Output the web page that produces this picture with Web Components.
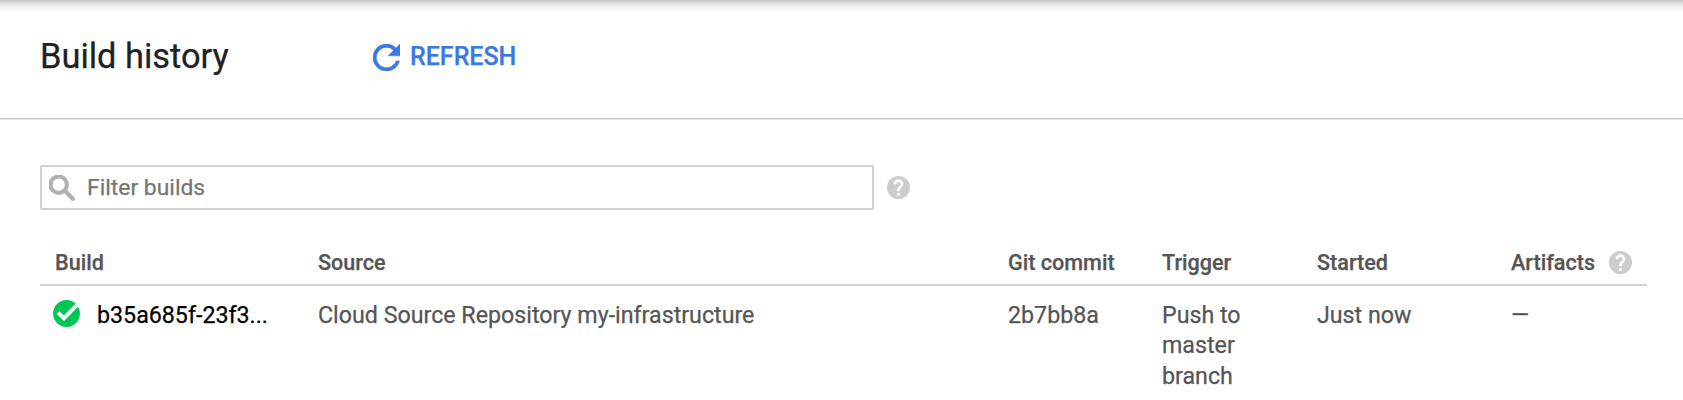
<!DOCTYPE html>
<html lang="en">
<head>
<meta charset="utf-8">
<title>Build history</title>
<style>
html,body{margin:0;background:#fff}
body{font-family:Roboto,"Liberation Sans",sans-serif;height:400px;overflow:hidden;-webkit-text-stroke:.25px}
</style>
</head>
<body>
<build-page></build-page>
<script>
const define = (name, html) => customElements.define(name, class extends HTMLElement {
  constructor() {
    super();
    const t = document.createElement('template');
    t.innerHTML = html;
    this.attachShadow({mode: 'open'}).append(t.content.cloneNode(true));
  }
});

define('help-icon', `<style>:host{display:block;width:23px;height:23px;flex:none}svg{display:block;width:100%;height:100%}</style>
<svg viewBox="2 2 20 20"><circle cx="12" cy="12" r="10" fill="#ccc"/><path fill="#fff" stroke="#fff" stroke-width=".4" d="M13 19h-2v-2h2v2zm2.07-7.75l-.9.92C13.45 12.9 13 13.5 13 15h-2v-.5c0-1.1.45-2.1 1.17-2.83l1.24-1.26c.37-.36.59-.86.59-1.41 0-1.1-.9-2-2-2s-2 .9-2 2H8c0-2.21 1.79-4 4-4s4 1.79 4 4c0 .88-.36 1.68-.93 2.25z"/></svg>`);

define('status-success', `<style>:host{display:block;width:27px;height:27px;flex:none}svg{display:block}</style>
<svg width="27" height="27" viewBox="0 0 27 27"><circle cx="13.5" cy="13.5" r="13.4" fill="#00c752"/><path d="M5 12.6L11 18.1L24 4.9" fill="none" stroke="#fff" stroke-width="4"/></svg>`);

define('refresh-button', `<style>:host{display:flex;align-items:center;color:#3b78e7;font-size:25px;font-weight:500;line-height:30px;white-space:nowrap}svg{display:block;width:27px;height:27px;margin-right:10px}</style>
<svg viewBox="4 4 16 16"><path fill="currentColor" stroke="currentColor" stroke-width=".3" d="M17.65 6.35C16.2 4.9 14.21 4 12 4c-4.42 0-7.99 3.58-7.99 8s3.57 8 7.99 8c3.73 0 6.84-2.55 7.73-6h-2.08c-.82 2.33-3.04 4-5.65 4-3.31 0-6-2.69-6-6s2.69-6 6-6c1.66 0 3.14.69 4.22 1.78L13 11h7V4l-2.35 2.35z"/></svg><slot></slot>`);

define('page-header', `<style>:host{display:flex;box-sizing:border-box;height:119px;border-bottom:1px solid #c8c8c8;box-shadow:0 1px #e8e8e8;padding-left:40px;background:linear-gradient(#c6c6c6,#dcdcdc 3px,#f3f3f3 7px,#fff 14px)}
h1{margin:36px 0 0;width:333px;font-size:34.4px;font-weight:400;line-height:40px;color:#212121;white-space:nowrap}</style>
<h1><slot></slot></h1><slot name="action"></slot>`);

define('filter-box', `<style>:host{display:flex;align-items:center;gap:13px;height:45px}
.box{display:flex;align-items:center;box-sizing:border-box;width:834px;height:45px;border:2px solid #d0d0d0;padding-left:7px;border-radius:2px}
svg{width:26px;height:26px;margin-right:12px}span{font-size:22.9px;line-height:30px;color:#757575}</style>
<div class="box"><svg viewBox="3 3 17.5 17.5"><path fill="#b0b0b0" stroke="#b0b0b0" stroke-width=".7" d="M15.5 14h-.79l-.28-.27C15.41 12.59 16 11.11 16 9.5 16 5.91 13.09 3 9.5 3S3 5.91 3 9.5 5.91 16 9.5 16c1.61 0 3.09-.59 4.23-1.57l.27.28v.79l5 4.99L20.49 19l-4.99-5zm-6 0C7.01 14 5 11.99 5 9.5S7.01 5 9.5 5 14 7.01 14 9.5 11.99 14 9.5 14z"/></svg><span><slot></slot></span></div><help-icon></help-icon>`);

define('build-row', `<style>:host{display:grid;grid-template-columns:263px 690px 154px 155px 194px 1fr;padding-left:15px;font-size:23.22px;line-height:30.4px;color:#555}
:host([head]){font-size:21.6px;font-weight:500;border-bottom:2px solid #d4d4d4}</style><slot></slot>`);

define('build-table', `<style>:host{display:block;width:1607px}
.h{height:36px;padding-top:1px}.r{padding-top:14px}.a{display:flex;align-items:center;height:30px}
.id{display:flex;color:#000;margin-left:-2px}.id status-success{margin:-.5px 17px 0 0}.t{width:100px}.a help-icon{margin:-2px 0 0 14px}</style>
<build-row head class="h"><span>Build</span><span>Source</span><span>Git commit</span><span>Trigger</span><span>Started</span><span class="a"><span>Artifacts</span><help-icon></help-icon></span></build-row>
<build-row class="r"><span class="id"><status-success></status-success><span>b35a685f-23f3...</span></span><span>Cloud Source Repository my-infrastructure</span><span>2b7bb8a</span><span class="t">Push to master branch</span><span>Just now</span><span>—</span></build-row>`);

define('build-page', `<style>:host{display:block}filter-box{margin:46px 0 0 40px}build-table{margin:37px 0 0 40px}refresh-button{margin-top:42px;height:30px}</style>
<page-header>Build history<refresh-button slot="action">REFRESH</refresh-button></page-header>
<filter-box>Filter builds</filter-box><build-table></build-table>`);
</script>
</body>
</html>
